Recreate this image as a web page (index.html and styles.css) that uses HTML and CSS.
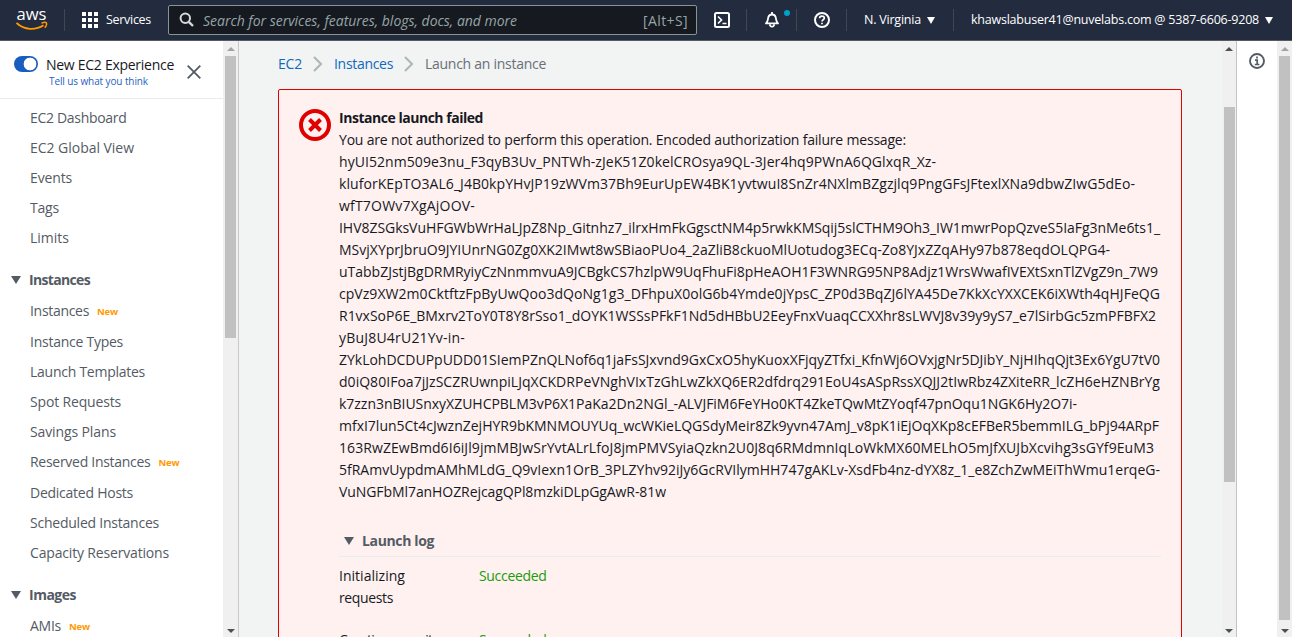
FILE: index.html
```html
<!DOCTYPE html>
<html lang="en">
<head>
<meta charset="utf-8">
<title>Launch an instance | EC2</title>
<link rel="stylesheet" href="styles.css">
</head>
<body>
<header class="topbar">
  <svg class="logo" width="34" height="34" viewBox="0 -5 34 34">
    <text x="0.5" y="11" textLength="30" lengthAdjust="spacingAndGlyphs" class="logo-text">aws</text>
    <path d="M0.5 14C8.500 21.300 19.500 21.500 27.500 16.300" fill="none" stroke="#ff9900" stroke-width="1.9"/>
    <path d="M25.500 14.300c2-1 4.300-1 5-.4.4 1-.5 3.400-1.800 4.800" fill="none" stroke="#ff9900" stroke-width="1.400"/>
  </svg>
  <i class="sep sep-logo"></i>
  <svg class="grid-icon" width="17" height="17" viewBox="0 0 17 17" fill="#fff">
    <path d="M0 0h4v4H0zM6 0h4v4H6zM12 0h4v4h-4zM0 6h4v4H0zM6 6h4v4H6zM12 6h4v4h-4zM0 12h4v4H0zM6 12h4v4H6zM12 12h4v4h-4z"/>
  </svg>
  <span class="services" data-w="45">Services</span>
  <div class="search">
    <svg width="16" height="16" viewBox="0 0 16 16" fill="none" stroke="#d5dbdb" stroke-width="2"><circle cx="6.3" cy="6.3" r="4.7"/><path d="M9.8 9.8L14 14" stroke-width="2.4"/></svg>
    <span class="placeholder" data-w="314">Search for services, features, blogs, docs, and more</span>
    <span class="shortcut" data-w="45">[Alt+S]</span>
  </div>
  <svg class="shell" width="18" height="18" viewBox="0 0 18 18" fill="none" stroke="#fff" stroke-width="2"><rect x="2" y="2" width="14" height="14" rx="1.5"/><path d="M5 5.5L8.5 9 5 12.5M9.5 12.5H13.500" stroke-width="1.7"/></svg>
  <i class="sep sep-a"></i>
  <div class="bell">
    <svg width="16" height="18" viewBox="0 0 16 18" fill="none" stroke="#fff" stroke-width="1.8" stroke-linejoin="round"><path d="M2 12.400C4 10.500 3.800 8.500 4.300 6.300 4.800 4.300 6.200 3.500 8 3.500s3.200.8 3.700 2.800C12.200 8.500 12 10.500 14 12.400z"/><path d="M8 1v2M6 13.200v1.300q2 2.400 4 0v-1.300"/></svg>
    <i class="dot"></i>
  </div>
  <i class="sep sep-b"></i>
  <svg class="help" width="18" height="18" viewBox="0 0 18 18" fill="none" stroke="#fff" stroke-width="2"><circle cx="9" cy="9" r="7"/><path d="M6.600 7.200C6.600 4.300 11.300 4.400 11.300 7 11.300 8.800 9 8.600 9 10.500M9 11.700v1.600" stroke-width="1.7"/></svg>
  <i class="sep sep-c"></i>
  <span class="region" data-w="57">N. Virginia</span><i class="caret"></i>
  <i class="sep sep-d"></i>
  <span class="account" data-w="288">khawslabuser41@nuvelabs.com @ 5387-6606-9208</span><i class="caret"></i>
</header>
<div class="body">
  <nav class="sidebar">
    <div class="experience">
      <i class="toggle"></i>
      <div class="experience-text">
        <span class="experience-title" data-w="128">New EC2 Experience</span>
        <a class="feedback"><span data-w="99">Tell us what you think</span></a>
      </div>
      <svg class="close" width="14" height="14" viewBox="0 0 14 14" stroke="#545b64" stroke-width="1.8"><path d="M.7.7l12.600 12.600M13.300.7L.7 13.300"/></svg>
    </div>
    <ul class="links">
      <li><span data-w="96.5">EC2 Dashboard</span></li>
      <li><span data-w="104">EC2 Global View</span></li>
      <li><span data-w="42">Events</span></li>
      <li><span data-w="29">Tags</span></li>
      <li><span data-w="39">Limits</span></li>
    </ul>
    <div class="group"><i class="arrow"></i><span data-w="61">Instances</span></div>
    <ul class="links">
      <li class="has-tag"><span data-w="59">Instances</span><b data-w="21">New</b></li>
      <li><span data-w="93">Instance Types</span></li>
      <li><span data-w="115">Launch Templates</span></li>
      <li><span data-w="91">Spot Requests</span></li>
      <li><span data-w="86">Savings Plans</span></li>
      <li class="has-tag"><span data-w="120.5">Reserved Instances</span><b data-w="21">New</b></li>
      <li><span data-w="103">Dedicated Hosts</span></li>
      <li><span data-w="129">Scheduled Instances</span></li>
      <li><span data-w="139">Capacity Reservations</span></li>
    </ul>
    <div class="group"><i class="arrow"></i><span data-w="47">Images</span></div>
    <ul class="links">
      <li class="has-tag"><span data-w="31">AMIs</span><b data-w="21">New</b></li>
    </ul>
  </nav>
  <div class="scrollbar side-scroll"><i class="up dim"></i><i class="thumb"></i><i class="down"></i></div>
  <main class="content">
    <div class="crumbs">
      <a data-w="24">EC2</a>
      <svg width="10" height="16" viewBox="0 0 10 16" fill="none" stroke="#aab7b8" stroke-width="2"><path d="M1 1l7 7-7 7"/></svg>
      <a data-w="59">Instances</a>
      <svg width="10" height="16" viewBox="0 0 10 16" fill="none" stroke="#aab7b8" stroke-width="2"><path d="M1 1l7 7-7 7"/></svg>
      <span data-w="121">Launch an instance</span>
    </div>
    <section class="alert">
      <svg class="alert-icon" width="32" height="32" viewBox="0 0 32 32" fill="none" stroke="#df0000" stroke-width="4"><circle cx="16" cy="16" r="14"/><path d="M10.500 10.500l11 11M21.500 10.500l-11 11"/></svg>
      <div class="alert-text">
        <div class="line title"><span data-w="144">Instance launch failed</span></div>
        <div class="line"><span data-w="567">You are not authorized to perform this operation. Encoded authorization failure message:</span></div>
        <div class="line"><span data-w="597">hyUI52nm509e3nu_F3qyB3Uv_PNTWh-zJeK51Z0kelCROsya9QL-3Jer4hq9PWnA6QGlxqR_Xz-</span></div>
        <div class="line"><span data-w="796">kluforKEpTO3AL6_J4B0kpYHvJP19zWVm37Bh9EurUpEW4BK1yvtwuI8SnZr4NXlmBZgzjlq9PngGFsJFtexlXNa9dbwZIwG5dEo-</span></div>
        <div class="line"><span data-w="136">wfT7OWv7XgAjOOV-</span></div>
        <div class="line"><span data-w="821">IHV8ZSGksVuHFGWbWrHaLJpZ8Np_Gitnhz7_ilrxHmFkGgsctNM4p5rwkKMSqij5slCTHM9Oh3_IW1mwrPopQzveS5IaFg3nMe6ts1_</span></div>
        <div class="line"><span data-w="771">MSvjXYprJbruO9JYIUnrNG0Zg0XK2IMwt8wSBiaoPUo4_2aZliB8ckuoMlUotudog3ECq-Zo8YJxZZqAHy97b878eqdOLQPG4-</span></div>
        <div class="line"><span data-w="819">uTabbZJstjBgDRMRyiyCzNnmmvuA9JCBgkCS7hzlpW9UqFhuFi8pHeAOH1F3WNRG95NP8Adjz1WrsWwafIVEXtSxnTlZVgZ9n_7W9</span></div>
        <div class="line"><span data-w="821">cpVz9XW2m0CktftzFpByUwQoo3dQoNg1g3_DFhpuX0olG6b4Ymde0jYpsC_ZP0d3BqZJ6lYA45De7KkXcYXXCEK6iXWth4qHJFeQG</span></div>
        <div class="line"><span data-w="817">R1vxSoP6E_BMxrv2ToY0T8Y8rSso1_dOYK1WSSsPFkF1Nd5dHBbU2EeyFnxVuaqCCXXhr8sLWVJ8v39y9yS7_e7lSirbGc5zmPFBFX2</span></div>
        <div class="line"><span data-w="126">yBuJ8U4rU21Yv-in-</span></div>
        <div class="line"><span data-w="821">ZYkLohDCDUPpUDD01SIemPZnQLNof6q1jaFsSJxvnd9GxCxO5hyKuoxXFjqyZTfxi_KfnWj6OVxjgNr5DJibY_NjHIhqQjt3Ex6YgU7tV0</span></div>
        <div class="line"><span data-w="821">d0iQ80IFoa7jJzSCZRUwnpiLJqXCKDRPeVNghVIxTzGhLwZkXQ6ER2dfdrq291EoU4sASpRssXQJJ2tIwRbz4ZXiteRR_lcZH6eHZNBrYg</span></div>
        <div class="line"><span data-w="738">k7zzn3nBIUSnxyXZUHCPBLM3vP6X1PaKa2Dn2NGl_-ALVJFiM6FeYHo0KT4ZkeTQwMtZYoqf47pnOqu1NGK6Hy2O7i-</span></div>
        <div class="line"><span data-w="820">mfxI7lun5Ct4cJwznZejHYR9bKMNMOUYUq_wcWKieLQGSdyMeir8Zk9yvn47AmJ_v8pK1iEjOqXKp8cEFBeR5bemmILG_bPj94ARpF</span></div>
        <div class="line"><span data-w="815">163RwZEwBmd6I6iJl9jmMBJwSrYvtALrLfoJ8jmPMVSyiaQzkn2U0J8q6RMdmnIqLoWkMX60MELhO5mJfXUJbXcvihg3sGYf9EuM3</span></div>
        <div class="line"><span data-w="821">5fRAmvUypdmAMhMLdG_Q9vIexn1OrB_3PLZYhv92iJy6GcRVIlymHH747gAKLv-XsdFb4nz-dYX8z_1_e8ZchZwMEiThWmu1erqeG-</span></div>
        <div class="line"><span data-w="327">VuNGFbMl7anHOZRejcagQPl8mzkiDLpGgAwR-81w</span></div>
        <div class="log-head"><i class="arrow"></i><span data-w="72">Launch log</span></div>
        <div class="log-row">
          <div class="log-name"><div class="line"><span data-w="66">Initializing</span></div><div class="line"><span data-w="54">requests</span></div></div>
          <div class="line ok"><span data-w="67.5">Succeeded</span></div>
        </div>
        <div class="log-row">
          <div class="log-name"><div class="line"><span data-w="100">Creating security</span></div></div>
          <div class="line ok"><span data-w="67.5">Succeeded</span></div>
        </div>
      </div>
    </section>
  </main>
  <div class="scrollbar main-scroll"><i class="up"></i><i class="thumb"></i><i class="down"></i></div>
  <aside class="info">
    <svg width="16" height="16" viewBox="0 0 16 16" fill="none" stroke="#545b64"><circle cx="8" cy="8" r="7" stroke-width="1.9"/><path d="M8 3.500v2M6 7.200h2.200v4M5.800 11.500h4.600" stroke-width="1.7"/></svg>
  </aside>
  <div class="scrollbar page-scroll"><i class="up dim"></i><i class="thumb"></i><i class="down"></i></div>
</div>
<script src="fit.js"></script>
</body>
</html>
```
FILE: styles.css
```css
* { box-sizing: border-box; }
body { margin: 0; height: 637px; overflow: hidden; display: flex; flex-direction: column; font: 14px/22px "Open Sans", "Noto Sans", sans-serif; color: #16191f; background: #f2f3f3; }
ul { list-style: none; margin: 0; padding: 0; }
svg, i { flex: none; display: block; }
[data-w] { white-space: nowrap; }
.topbar { height: 41px; flex: none; display: flex; align-items: center; background: #232b3e; border-bottom: 1px solid #545b64; color: #fff; font-size: 12.5px; padding-left: 16px; }
.logo-text { font: 500 17px "Open Sans", sans-serif; fill: #fff; }
.logo { margin-top: 2px; }
.sep { width: 1px; height: 22px; background: #414750; }
.sep-logo { margin: 0 17px 0 14px; }
.services { margin-left: 7px; width: 45px; }
.search { margin-left: 17px; width: 529px; height: 30px; display: flex; align-items: center; padding: 0 8px 0 10px; background: #16191f; border: 1px solid #879596; border-radius: 2px; color: #95a5a6; font-size: 14px; }
.placeholder { margin-left: 8px; flex: 1; font-style: italic; }
.placeholder, .shortcut { padding-top: 2px; }
.shell { margin-left: 16px; }
.sep-a { margin-left: 15px; }
.bell { position: relative; margin-left: 17px; }
.dot { position: absolute; left: 20px; top: -1px; width: 6px; height: 6px; border-radius: 50%; background: #00a1c9; }
.sep-b { margin-left: 16px; }
.help { margin-left: 16px; }
.sep-c { margin-left: 15px; }
.region { margin-left: 17px; }
.caret { margin-left: 6px; border: 4px solid transparent; border-top: 7px solid #fff; border-bottom: 0; }
.sep-d { margin-left: 18px; }
.account { margin-left: 17px; }
.body { flex: 1; min-height: 0; display: flex; }
.sidebar { width: 223px; background: #fff; color: #545b64; overflow: hidden; }
.experience { height: 58px; border-bottom: 1px solid #eaeded; display: flex; padding: 15px 0 0 14px; margin-bottom: 4px; }
.toggle { width: 24px; height: 16px; border-radius: 8px; background: radial-gradient(circle at 16px 8px, #fff 6px, #1a5dc0 6.700px); }
.experience-text { width: 148px; padding-left: 8px; display: flex; flex-direction: column; color: #16191f; line-height: 17px; }
.experience-title { font-size: 14px; }
.feedback { padding-left: 3px; font-size: 10px; line-height: 16px; color: #1f5fc4; }
.close { margin: 9px 0 0 1px; }
.links li { height: 30px; padding-left: 30px; display: flex; align-items: center; }
.links .has-tag { height: 31px; padding-bottom: 2px; }
.has-tag b { margin: 3px 0 0 8px; font-size: 9.500px; color: #ff9900; }
.group { height: 31px; margin-top: 12px; padding: 0 0 2px 11px; display: flex; align-items: center; font-weight: 700; }
.arrow { border: 5px solid transparent; border-top: 8px solid #545b64; border-bottom: 0; margin-right: 8px; }
.scrollbar { width: 16px; flex: none; background: #f0f0f0; display: flex; flex-direction: column; align-items: center; }
.up { border: 4px solid transparent; border-top: 0; border-bottom: 4px solid #505050; margin-top: 6px; }
.up.dim { border-bottom-color: #a3a3a3; }
.down { border: 4px solid transparent; border-bottom: 0; border-top: 4px solid #505050; margin: auto 0 4px; }
.thumb { width: 11px; background: #c1c1c1; }
.side-scroll { border-right: 1px solid #c4c9c9; }
.side-scroll .thumb { height: 282px; margin-top: 5px; }
.main-scroll { width: 15px; border-right: 1px solid #c0c6c6; }
.main-scroll .thumb { height: 375px; margin-top: 56px; }
.page-scroll { width: 15px; }
.page-scroll .thumb { height: 564px; margin-top: 5px; }
.content { width: 983px; padding: 12px 40px 0 39px; overflow: hidden; }
.crumbs { height: 22px; display: flex; align-items: center; color: #687078; }
.crumbs a { color: #0f69be; }
.crumbs svg { margin: 0 11px; }
.alert { margin-top: 14px; height: 600px; border: 1px solid #df0000; border-radius: 2px 2px 0 0; background: #fff1f0; display: flex; padding: 17px 20px 0; }
.alert-icon { margin: 2px 8px 0 0; }
.alert-text { flex: 1; }
.line { height: 22px; white-space: nowrap; }
.title { font-weight: 700; }
.log-head { height: 31px; margin-top: 23px; padding: 0 0 0 5px; border-bottom: 1px solid #eaeded; display: flex; align-items: center; font-weight: 700; color: #545b64; }
.log-row { display: flex; padding-top: 8px; height: 64px; }
.log-name { width: 140px; }
.ok { color: #1a9c0a; }
.info { width: 40px; background: #fff; padding: 12px 0 0 12px; }
```
FILE: fit.js
```javascript
// Track each label so that it fills its design width.
document.querySelectorAll('[data-w]').forEach(function (el) {
  var range = document.createRange();
  range.selectNodeContents(el);
  var natural = range.getBoundingClientRect().width;
  el.style.letterSpacing = (el.dataset.w - natural) / el.textContent.length + 'px';
});
```
